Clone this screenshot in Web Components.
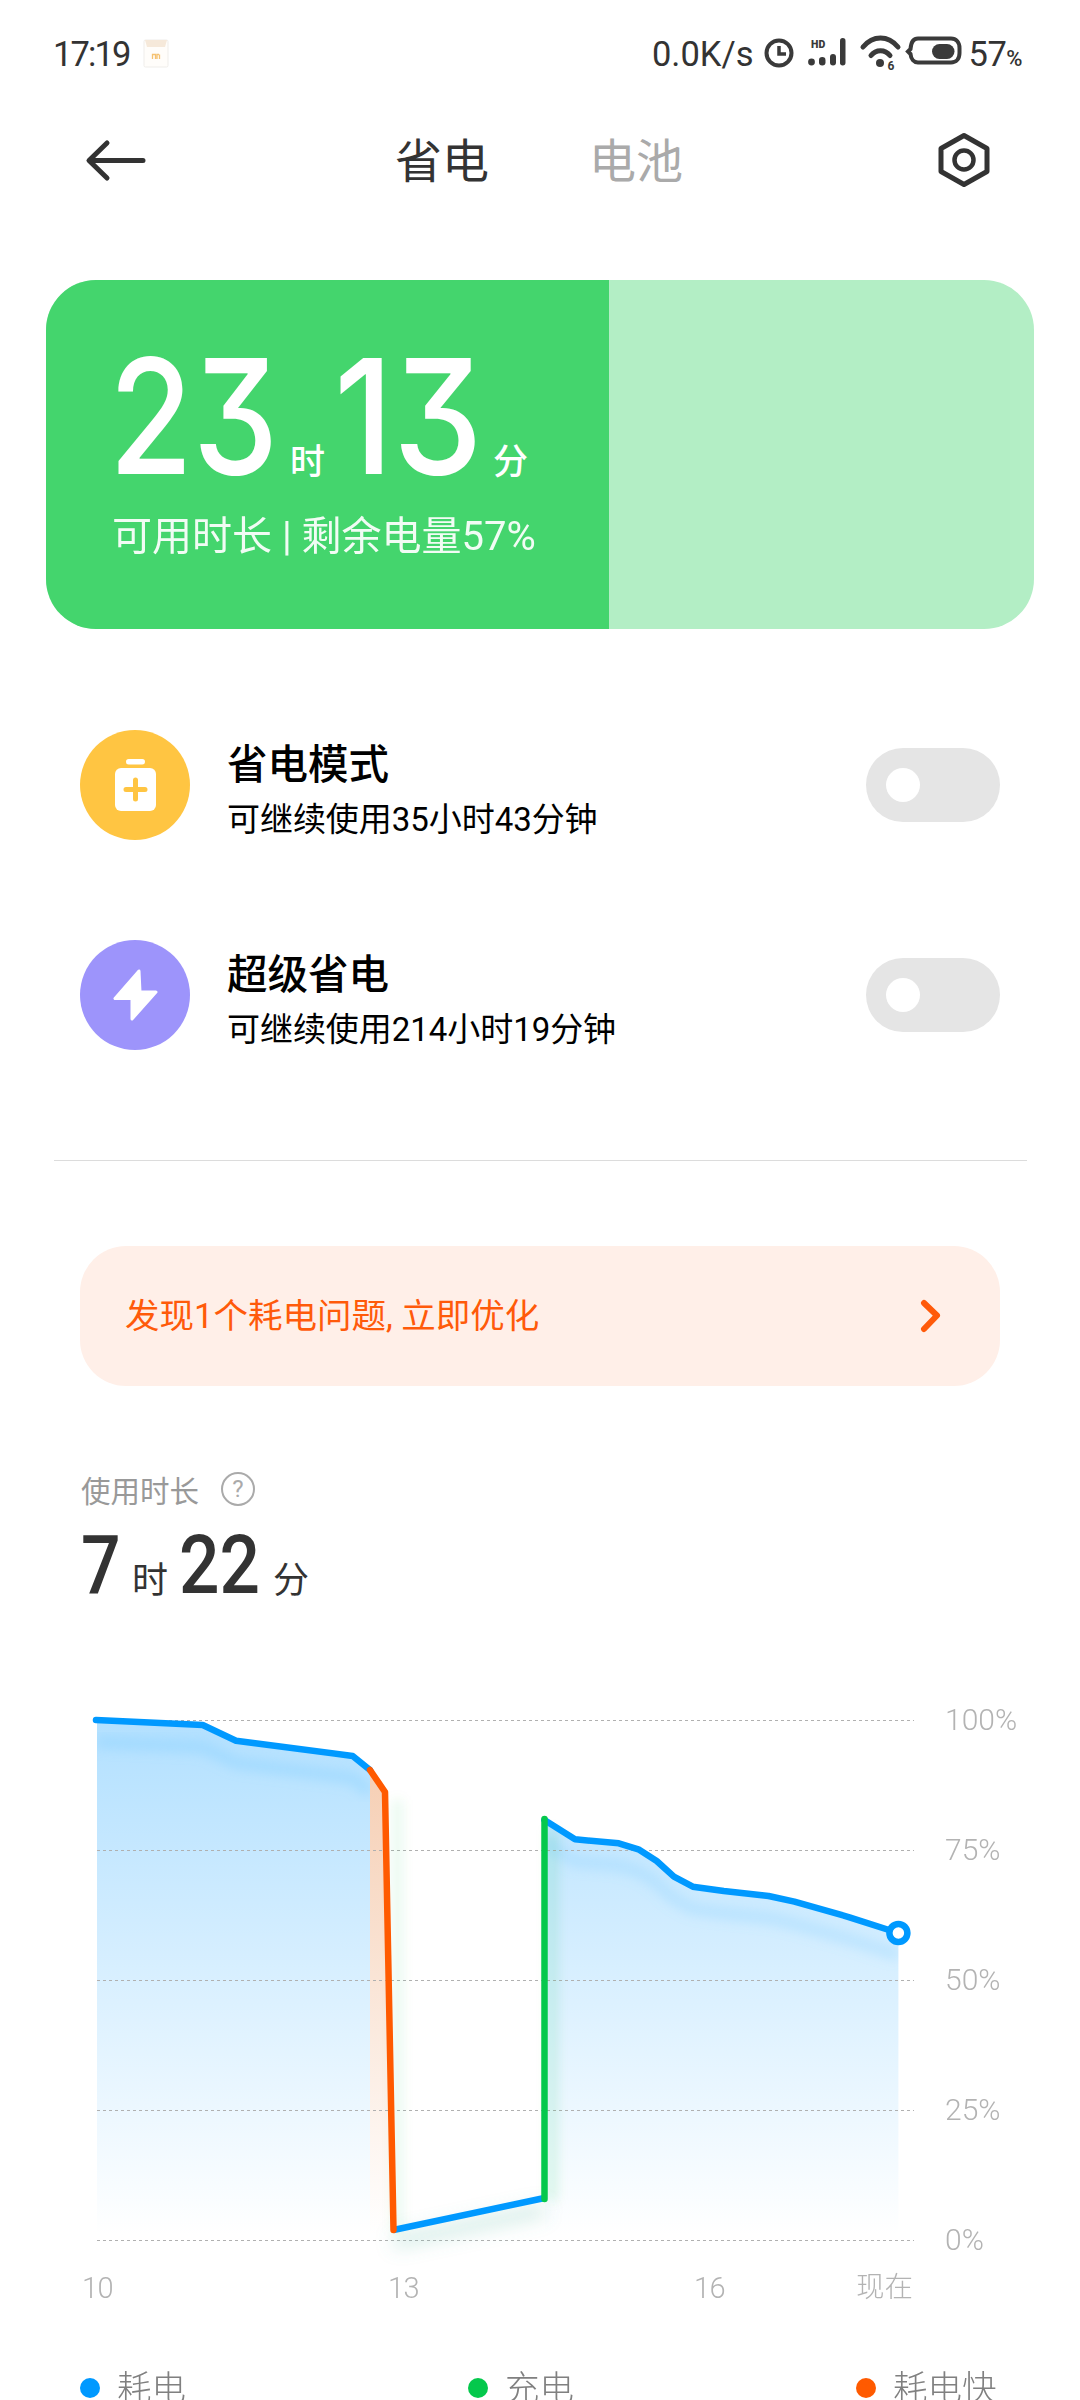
<!DOCTYPE html>
<html lang="zh">
<head>
<meta charset="utf-8">
<title>省电</title>
<style>
  html, body { margin: 0; padding: 0; background: #fff; }
  body {
    width: 1080px;
    height: 2400px;
    overflow: hidden;
    font-family: Roboto, "Noto Sans CJK SC", sans-serif;
    color: #333;
  }
</style>
</head>
<body>
<status-bar></status-bar>
<nav-bar></nav-bar>
<hero-card></hero-card>
<mode-list>
  <mode-row>
    <svg slot="icon" width="110" height="110" viewBox="0 0 110 110">
      <circle cx="55" cy="55" r="55" fill="#ffc542"/>
      <rect x="46" y="29" width="19" height="5.5" rx="2.7" fill="#fff"/>
      <rect x="35" y="38" width="41" height="43" rx="6" fill="#fff"/>
      <path d="M55.5 50v19M46 59.500h19" stroke="#ffc542" stroke-width="5" stroke-linecap="round"/>
    </svg>
    <span slot="title">省电模式</span>
    可继续使用35小时43分钟
  </mode-row>
  <mode-row>
    <svg slot="icon" width="110" height="110" viewBox="0 0 110 110">
      <circle cx="55" cy="55" r="55" fill="#9d94fb"/>
      <path d="M59 31L35 58.500H52V79L76 52H60z" fill="#fff" stroke="#fff" stroke-width="3" stroke-linejoin="round"/>
    </svg>
    <span slot="title">超级省电</span>
    可继续使用214小时19分钟
  </mode-row>
</mode-list>
<tip-banner>发现1个耗电问题, 立即优化</tip-banner>
<usage-summary></usage-summary>
<battery-chart></battery-chart>
<chart-legend>
  <legend-item color="#0099ff">耗电</legend-item>
  <legend-item color="#05c84c">充电</legend-item>
  <legend-item color="#ff5a00">耗电快</legend-item>
</chart-legend>

<script>
const latin = 'Roboto, "Noto Sans CJK SC", sans-serif';

// digits from the system font are wider than the reference, so squeeze them in a fixed box
class TimeNum extends HTMLElement {
  constructor() {
    super();
    this.attachShadow({ mode: "open" });
  }
  connectedCallback() {
    const w = this.getAttribute("w");
    const sx = this.getAttribute("sx") || 1;
    this.shadowRoot.innerHTML = `<style>
      :host { display: inline-block; width: ${w}px; white-space: nowrap; }
      span { display: inline-block; transform: scaleX(${sx}); transform-origin: 0 50%; }
    </style><span><slot></slot></span>`;
  }
}

class StatusBar extends HTMLElement {
  constructor() {
    super();
    this.attachShadow({ mode: "open" });
    this.shadowRoot.innerHTML = `<style>
      :host {
        display: flex; align-items: center; height: 108px; box-sizing: border-box;
        padding: 0 58px 0 53px; color: #333;
        font: 400 34.500px ${latin};
      }
      .time { letter-spacing: -1.900px; }
      .note { margin-left: 13px; display: block; }
      .right { margin-left: auto; display: flex; align-items: center; }
      .speed { margin-right: 7px; }
      .pct { margin-left: 6px; letter-spacing: -.5px; }
      .pct small { font-size: 22px; font-weight: 500; }
      svg { display: block; }
    </style>
    <span class="time">17:19</span>
    <svg class="note" width="28" height="32" viewBox="144 37 28 32">
      <rect x="146" y="39" width="24" height="27" rx="1.500" fill="#fffdfa" stroke="#efedea" stroke-width="1"/>
      <path d="M147 39h22l-2 7h-18z" fill="#f6e9da"/>
      <path d="M154.500 58v-4.500h3v4.500M159 58v-4.500h2M161.500 53.500V58" fill="none" stroke="#f5c272" stroke-width="1.300"/>
    </svg>
    <div class="right">
      <span class="speed">0.0K/s</span>
      <svg width="202" height="44" viewBox="760 32 202 44" fill="none" stroke="#3a3a3a">
        <circle cx="778" cy="53" r="12.500" stroke-width="4"/>
        <path d="M778 46v8h7" stroke-width="3.500"/>
        <text x="810" y="47.500" font-family="Roboto" font-size="10.500" font-weight="900" fill="#3a3a3a" stroke="none">HD</text>
        <circle cx="810.500" cy="62" r="3.400" fill="#3a3a3a" stroke="none"/>
        <rect x="818" y="57" width="6.500" height="8.500" rx="3.200" fill="#3a3a3a" stroke="none"/>
        <rect x="829" y="54" width="6" height="11.500" rx="3" fill="#3a3a3a" stroke="none"/>
        <rect x="839" y="38" width="5.500" height="27.500" rx="2.700" fill="#3a3a3a" stroke="none"/>
        <path d="M862 47C872 35 887 35 897 47M870 55.500C875 49 884 49 889 55.500" stroke-width="5" stroke-linecap="round"/>
        <circle cx="879" cy="63" r="4" fill="#3a3a3a" stroke="none"/>
        <text x="886.500" y="70" font-family="Roboto" font-size="12" font-weight="700" fill="#3a3a3a" stroke="none">6</text>
        <path d="M917 38.500H950C955 38.500 958.500 42 958.500 48V53C958.500 59 955 62.500 950 62.500H917C913 62.500 910 59 909.500 54L907 51.500L909.500 49C910 42 913 38.500 917 38.500Z" stroke-width="4"/>
        <rect x="931" y="44" width="22.500" height="15" rx="7.500" fill="#3a3a3a" stroke="none"/>
      </svg>
      <span class="pct">57<small>%</small></span>
    </div>`;
  }
}

class NavBar extends HTMLElement {
  constructor() {
    super();
    this.attachShadow({ mode: "open" });
    this.shadowRoot.innerHTML = `<style>
      :host {
        display: flex; align-items: center; height: 104px; box-sizing: border-box;
        padding: 0 86px 0 85px;
        font: 400 47px/1 ${latin}; color: #333;
      }
      svg { display: block; }
      .tabs { display: flex; gap: 100px; margin: 2px 0 0 247px; }
      .off { color: #aaa; }
      .gear { margin-left: auto; }
    </style>
    <svg width="63" height="46" viewBox="86 137 63 46" fill="none" stroke="#333" stroke-width="5" stroke-linecap="round" stroke-linejoin="round">
      <path d="M108 143L90 160.500L108 178M92 160.500H144"/>
    </svg>
    <div class="tabs"><span>省电</span><span class="off">电池</span></div>
    <svg class="gear" width="60" height="60" viewBox="939 130 60 60" fill="none" stroke="#333" stroke-width="5" stroke-linejoin="round">
      <path d="M969 135.500L992 148.500V171.500L969 184.500L946 171.500V148.500Z"/>
      <circle cx="969" cy="160" r="9.500" stroke-width="4.500"/>
    </svg>`;
  }
}

class HeroCard extends HTMLElement {
  constructor() {
    super();
    this.attachShadow({ mode: "open" });
    this.shadowRoot.innerHTML = `<style>
      :host {
        display: block; margin: 68px 46px 0; height: 349px; border-radius: 50px; overflow: hidden;
        background: #b3eec5; color: #fff;
      }
      .fill { width: 563px; height: 100%; background: #44d56d; box-sizing: border-box; padding: 56px 0 0 63px; }
      .big {
        display: flex; align-items: baseline; height: 138px;
        font: 500 160px/1 Inter, ${latin}; font-feature-settings: "cv09";
      }
      .unit { font: 500 35px/1 "Noto Sans CJK SC", sans-serif; }
      .u1 { margin: 0 9px 0 21px; }
      .u2 { margin-left: 0; }
      .sub { margin: 41px 0 0 3px; font: 400 40px/1.100 ${latin}; white-space: nowrap; opacity: .93; }
    </style>
    <div class="fill">
      <div class="big">
        <time-num w="160" sx=".85">23</time-num><span class="unit u1">时</span>
        <time-num w="159" sx=".89">13</time-num><span class="unit u2">分</span>
      </div>
      <div class="sub">可用时长 | 剩余电量57%</div>
    </div>`;
  }
}

class ModeList extends HTMLElement {
  constructor() {
    super();
    this.attachShadow({ mode: "open" });
    this.shadowRoot.innerHTML = `<style>
      :host {
        display: flex; flex-direction: column; gap: 100px;
        margin: 101px 53px 0 54px; padding-bottom: 110px; border-bottom: 1px solid #dcdcdc;
      }
    </style><slot></slot>`;
  }
}

class ModeRow extends HTMLElement {
  constructor() {
    super();
    this.attachShadow({ mode: "open" });
    this.shadowRoot.innerHTML = `<style>
      :host { display: flex; align-items: center; height: 110px; padding: 0 27px 0 26px; color: #000; font-family: ${latin}; }
      ::slotted(svg) { display: block; }
      .text { margin-left: 37px; flex: 1; margin-top: 10px; }
      .title { font-size: 40.500px; font-weight: 500; line-height: 56px; }
      .sub { font-size: 33px; line-height: 46px; margin-top: 4px; font-weight: 400; letter-spacing: -.05px; }
    </style>
    <slot name="icon"></slot>
    <div class="text">
      <div class="title"><slot name="title"></slot></div>
      <div class="sub"><slot></slot></div>
    </div>
    <toggle-switch></toggle-switch>`;
  }
}

class ToggleSwitch extends HTMLElement {
  constructor() {
    super();
    this.attachShadow({ mode: "open" });
    this.shadowRoot.innerHTML = `<style>
      :host {
        display: flex; align-items: center; width: 134px; height: 74px; box-sizing: border-box;
        padding-left: 20px; border-radius: 37px; background: #e5e5e5;
      }
      i { display: block; width: 34px; height: 34px; border-radius: 50%; background: #fff; }
    </style><i></i>`;
  }
}

class TipBanner extends HTMLElement {
  constructor() {
    super();
    this.attachShadow({ mode: "open" });
    this.shadowRoot.innerHTML = `<style>
      :host {
        display: flex; align-items: center; height: 140px; box-sizing: border-box;
        margin: 85px 80px 0 80px; padding: 0 57px 0 45px; border-radius: 46px;
        background: #ffefe8; color: #ff5a0a; font: 400 34.500px/1 ${latin};
      }
      svg { display: block; margin-left: auto; }
    </style>
    <slot></slot>
    <svg width="24" height="34" viewBox="0 0 24 34" fill="none" stroke="#ff5a0a" stroke-width="6" stroke-linecap="round" stroke-linejoin="round">
      <path d="M5 4L18 16.500L5 30"/>
    </svg>`;
  }
}

class UsageSummary extends HTMLElement {
  constructor() {
    super();
    this.attachShadow({ mode: "open" });
    this.shadowRoot.innerHTML = `<style>
      :host { display: block; margin: 80px 0 0 81px; height: 234px; font-family: ${latin}; }
      .label { display: flex; align-items: center; height: 46px; font-size: 29.500px; color: #999; }
      .help {
        display: flex; align-items: center; justify-content: center; margin-left: 22px;
        width: 34px; height: 34px; box-sizing: border-box; border: 2.500px solid #aaa; border-radius: 50%;
        font-size: 24px; color: #aaa;
      }
      .total { display: flex; align-items: baseline; margin-top: 14px; height: 80px; font: 500 81px/80px ${latin}; color: #333; }
      .unit { font: 400 36px/1 "Noto Sans CJK SC", sans-serif; }
      .u1 { margin: 0 11px 0 12px; }
      .u2 { margin-left: 16px; }
    </style>
    <div class="label">使用时长<span class="help">?</span></div>
    <div class="total">
      <time-num w="39" sx=".86">7</time-num><span class="unit u1">时</span>
      <time-num w="78" sx=".88">22</time-num><span class="unit u2">分</span>
    </div>`;
  }
}

class BatteryChart extends HTMLElement {
  constructor() {
    super();
    this.attachShadow({ mode: "open" });
    const left = "96,1720 202.700,1725 236,1740.700 352.700,1756 370,1770";
    const right = "544.400,1820 575,1839.300 618.800,1843.300 638.400,1849.300 656.700,1861 673.900,1876.700 692.800,1886.700 723.800,1891 768.600,1896 794.400,1901.700 849.500,1917.300 898.400,1933";
    const grid = [1720.500, 1850.500, 1980.500, 2110.500, 2240.500]
      .map((y) => `<path d="M97 ${y}H914"/>`).join("");
    this.shadowRoot.innerHTML = `<style>
      :host { display: block; font: 300 30px/40px ${latin}; color: #b3b3b3; }
      .plot { display: flex; }
      svg { display: block; overflow: visible; flex: none; }
      .ylabels { display: flex; flex-direction: column; gap: 90px; margin-left: 15px; }
      .xlabels {
        display: grid; grid-template-columns: 306px 306px 162px auto; margin-top: 9px; padding-left: 82px;
        font-size: 29px; line-height: 38px; letter-spacing: -.6px;
      }
      .now { font-size: 28.500px; letter-spacing: 0; }
    </style>
    <div class="plot">
      <svg width="930" height="560" viewBox="0 1700 930 560" fill="none">
        <defs>
          <linearGradient id="blue" gradientUnits="userSpaceOnUse" x1="0" y1="1720" x2="0" y2="2235">
            <stop offset="0" stop-color="#b2e0ff"/><stop offset="1" stop-color="#fff"/>
          </linearGradient>
          <linearGradient id="peach" gradientUnits="userSpaceOnUse" x1="0" y1="1780" x2="0" y2="2235">
            <stop offset="0" stop-color="#f6d0b6"/><stop offset="1" stop-color="#fff"/>
          </linearGradient>
          <filter id="soft" x="-20%" y="-20%" width="140%" height="140%"><feGaussianBlur stdDeviation="6"/></filter>
          <filter id="softer" filterUnits="userSpaceOnUse" x="360" y="2170" width="220" height="110"><feGaussianBlur stdDeviation="9"/></filter>
          <clipPath id="area-left"><polygon points="97,1720 370,1720 370,2240 97,2240"/></clipPath>
          <clipPath id="area-right"><polygon points="545,1810 898.400,1810 898.400,2240 545,2240"/></clipPath>
        </defs>
        <polygon fill="url(#blue)" points="97,1720 202.700,1725 236,1740.700 352.700,1756 370,1770 370,2240 97,2240"/>
        <polygon fill="url(#peach)" points="370,1770 385,1791.700 393,2240 370,2240"/>
        <polygon fill="url(#blue)" points="${right} 898.400,2240 545,2240"/>
        <g clip-path="url(#area-left)">
          <polyline points="${left}" stroke="#7cccff" stroke-opacity=".36" stroke-width="12" filter="url(#soft)" transform="translate(0 22)"/>
        </g>
        <g clip-path="url(#area-right)">
          <polyline points="${right}" stroke="#7cccff" stroke-opacity=".28" stroke-width="12" filter="url(#soft)" transform="translate(0 22)"/>
        </g>
        <g stroke="#b0b0b0" stroke-width="1" stroke-dasharray="3 3">${grid}</g>
        <g filter="url(#soft)" stroke-width="9">
          <path d="M393.500 1800V2232" stroke="#05c84c" stroke-opacity=".1" transform="translate(4 0)"/>
          <path d="M546 1830V2200" stroke="#05c84c" stroke-opacity=".16" transform="translate(6 0)"/>
        </g>
        <path d="M393.500 2242L544.500 2210" stroke="#5fb8a8" stroke-opacity=".26" stroke-width="14" filter="url(#softer)"/>
        <g stroke-width="6.500" stroke-linecap="round" stroke-linejoin="round">
          <polyline points="${left}" stroke="#0099ff"/>
          <polyline points="${right}" stroke="#0099ff"/>
          <path d="M393.500 2230L544.500 2198" stroke="#0099ff" stroke-linecap="butt"/>
          <polyline points="370,1770 385,1792 393.500,2230" stroke="#ff5a00"/>
          <path d="M544.500 1819V2199" stroke="#05c84c"/>
          <circle cx="898.400" cy="1933" r="9" fill="#fff" stroke="#0099ff" stroke-width="6.500"/>
        </g>
      </svg>
      <div class="ylabels"><span>100%</span><span>75%</span><span>50%</span><span>25%</span><span>0%</span></div>
    </div>
    <div class="xlabels"><span>10</span><span>13</span><span>16</span><span class="now">现在</span></div>`;
  }
}

class ChartLegend extends HTMLElement {
  constructor() {
    super();
    this.attachShadow({ mode: "open" });
    this.shadowRoot.innerHTML = `<style>
      :host { display: grid; grid-template-columns: 388px 388px auto; margin-top: 64px; padding-left: 80px; }
    </style><slot></slot>`;
  }
}

class LegendItem extends HTMLElement {
  constructor() {
    super();
    this.attachShadow({ mode: "open" });
  }
  connectedCallback() {
    const color = this.getAttribute("color");
    this.shadowRoot.innerHTML = `<style>
      :host { display: flex; align-items: center; gap: 17px; font: 300 34.500px/34px ${latin}; color: #808080; }
      i { display: block; width: 20px; height: 20px; border-radius: 50%; background: ${color}; }
    </style><i></i><slot></slot>`;
  }
}

customElements.define("time-num", TimeNum);
customElements.define("status-bar", StatusBar);
customElements.define("nav-bar", NavBar);
customElements.define("hero-card", HeroCard);
customElements.define("mode-list", ModeList);
customElements.define("mode-row", ModeRow);
customElements.define("toggle-switch", ToggleSwitch);
customElements.define("tip-banner", TipBanner);
customElements.define("usage-summary", UsageSummary);
customElements.define("battery-chart", BatteryChart);
customElements.define("chart-legend", ChartLegend);
customElements.define("legend-item", LegendItem);
</script>
</body>
</html>
